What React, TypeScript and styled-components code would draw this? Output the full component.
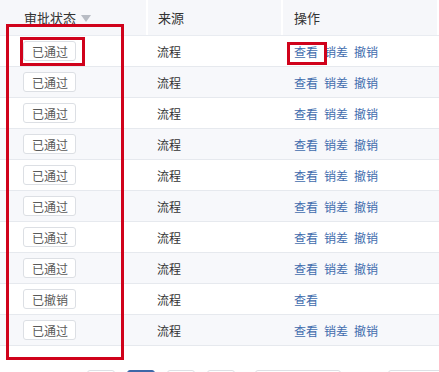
import React from "react";
import styled, { createGlobalStyle } from "styled-components";

const Global = createGlobalStyle`
  html, body { margin: 0; padding: 0; background: #fff; }
  body { font-family: "Noto Sans CJK SC", "Noto Sans", sans-serif; overflow: hidden; }
`;

const Page = styled.div`
  position: relative;
  width: 439px;
  height: 372px;
  overflow: hidden;
`;

const Table = styled.div`
  display: flex;
  flex-direction: column;
`;

const cols = "148px 135px 1fr";

const HeaderRow = styled.div`
  display: grid;
  grid-template-columns: ${cols};
  height: 36px;
  border-bottom: 1px solid #e9ecf1;
  box-sizing: border-box;
`;

const HeaderCell = styled.div<{ $pl: number }>`
  display: flex;
  align-items: center;
  gap: 5px;
  padding-left: ${(p) => p.$pl}px;
  background: #f6f7fa;
  border-right: 2px solid #fff;
  font-size: 13px;
  color: #333;
`;

const SortTri = styled.span`
  display: inline-block;
  width: 0;
  height: 0;
  border-left: 5px solid transparent;
  border-right: 5px solid transparent;
  border-top: 7px solid #b8bcc4;
  margin-top: 1px;
`;

const Row = styled.div<{ $alt: boolean }>`
  display: grid;
  grid-template-columns: ${cols};
  height: 31px;
  align-items: center;
  box-sizing: border-box;
  border-bottom: 1px solid #e6e9ee;
  background: ${(p) => (p.$alt ? "#f7f8fb" : "#fff")};
`;

const Cell = styled.div<{ $pl: number }>`
  display: flex;
  align-items: center;
  gap: 6px;
  padding-left: ${(p) => p.$pl}px;
  font-size: 12px;
  color: #333;
`;

const Tag = styled.span`
  display: inline-flex;
  align-items: center;
  height: 20px;
  padding: 0 7px 0 8px;
  border: 1px solid #dcdfe4;
  border-radius: 3px;
  background: #fff;
  font-size: 12px;
  color: #5a5a5a;
  box-sizing: border-box;
`;

const Link = styled.span`
  color: #416cad;
  font-size: 12px;
`;

const Pager = styled.div`
  display: flex;
  gap: 12px;
  padding-left: 87px;
  margin-top: 24px;
`;

const PageBtn = styled.div<{ $w: number; $active?: boolean; $ml?: number }>`
  width: ${(p) => p.$w}px;
  height: 28px;
  margin-left: ${(p) => p.$ml ?? 0}px;
  border: 1px solid ${(p) => (p.$active ? "#3d68a8" : "#dde0e5")};
  background: ${(p) => (p.$active ? "#3d68a8" : "#fff")};
  border-radius: 3px;
  box-sizing: border-box;
  flex: none;
`;

const Mark = styled.div`
  position: absolute;
  border: 3px solid #d0021b;
  box-sizing: border-box;
  pointer-events: none;
`;

const rows = [
  "已通过", "已通过", "已通过", "已通过", "已通过",
  "已通过", "已通过", "已通过", "已撤销", "已通过",
];

export default function App() {
  return (
    <Page>
      <Global />
      <Table>
        <HeaderRow>
          <HeaderCell $pl={24}>
            审批状态
            <SortTri />
          </HeaderCell>
          <HeaderCell $pl={10}>来源</HeaderCell>
          <HeaderCell $pl={11}>操作</HeaderCell>
        </HeaderRow>
        {rows.map((s, i) => (
          <Row key={i} $alt={i % 2 === 1}>
            <Cell $pl={23}>
              <Tag>{s}</Tag>
            </Cell>
            <Cell $pl={9}>流程</Cell>
            <Cell $pl={11}>
              <Link>查看</Link>
              {s === "已通过" && (
                <>
                  <Link>销差</Link>
                  <Link>撤销</Link>
                </>
              )}
            </Cell>
          </Row>
        ))}
      </Table>
      <Pager>
        <PageBtn $w={28} />
        <PageBtn $w={28} $active />
        <PageBtn $w={28} />
        <PageBtn $w={28} />
        <PageBtn $w={86} $ml={8} />
        <PageBtn $w={60} $ml={35} />
      </Pager>
      <Mark style={{ left: 6, top: 24, width: 118, height: 336 }} />
      <Mark style={{ left: 20, top: 37, width: 65, height: 29 }} />
      <Mark style={{ left: 287, top: 42, width: 40, height: 23 }} />
    </Page>
  );
}
